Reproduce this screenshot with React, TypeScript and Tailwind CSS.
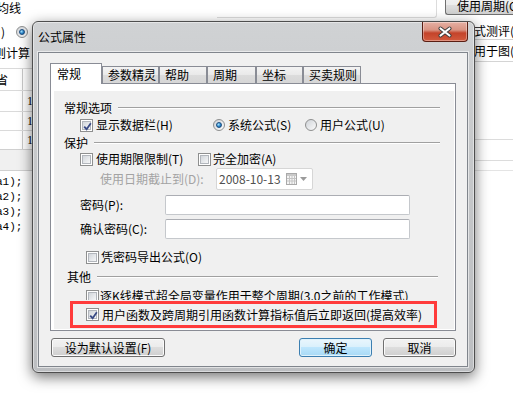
import type { ReactNode } from "react";

function CheckBox({ checked = false }: { checked?: boolean }) {
  return (
    <span className="relative flex h-[13px] w-[13px] shrink-0 items-center justify-center border border-[#8e8f8f] bg-white">
      <span className="h-[9px] w-[9px] border border-[#b2b6bc] bg-[linear-gradient(135deg,#d2d6db,#f6f7f8)]" />
      {checked && (
        <svg className="absolute left-[1px] top-[1px]" width="11" height="11" viewBox="0 0 11 11">
          <path d="M2.2 5.6 L4.6 8.2 L8.8 2.2" fill="none" stroke="#3a4b85" strokeWidth="1.8" />
        </svg>
      )}
    </span>
  );
}

function Radio({ checked = false }: { checked?: boolean }) {
  return (
    <span className="flex h-[12px] w-[12px] shrink-0 items-center justify-center rounded-full border border-[#8e8f8f] bg-[linear-gradient(135deg,#cfd3d8,#fbfbfb)]">
      {checked && (
        <span className="h-[6px] w-[6px] rounded-full border border-[#1b4c7e] bg-[radial-gradient(circle_at_35%_35%,#a8e4ff,#2b8ad0_55%,#164d84)]" />
      )}
    </span>
  );
}

function Section({ label, pad, lineRight }: { label: string; pad: string; lineRight: string }) {
  return (
    <div className={`flex h-[14px] items-center ${pad}`}>
      <span className="whitespace-nowrap">{label}</span>
      <span className={`ml-[6px] h-[2px] flex-1 border-t border-b border-t-[#a0a0a0] border-b-white ${lineRight}`} />
    </div>
  );
}

function WinButton({ children, width, primary = false }: { children: ReactNode; width: string; primary?: boolean }) {
  return (
    <div
      className={`flex h-[19px] ${width} items-center justify-center rounded-[3px] border ${
        primary
          ? "border-[#3c7fb1] bg-[linear-gradient(to_bottom,#eaf6fd_0%,#d9f0fc_50%,#bee6fd_50%,#a7d9f5_100%)] shadow-[inset_0_0_0_1px_#dff2fc]"
          : "border-[#707070] bg-[linear-gradient(to_bottom,#f2f2f2_0%,#ebebeb_50%,#dddddd_50%,#cfcfcf_100%)] shadow-[inset_0_0_0_1px_#fbfbfb]"
      }`}
    >
      {children}
    </div>
  );
}

const tabs = [
  { label: "参数精灵", w: "w-[57px]" },
  { label: "帮助", w: "w-[48px]" },
  { label: "周期", w: "w-[49px]" },
  { label: "坐标", w: "w-[47px]" },
  { label: "买卖规则", w: "w-[58px]" },
];

function BackgroundApp() {
  return (
    <div className="flex h-full flex-col">
      {/* top strip of the main window */}
      <div className="flex h-[21px] items-start">
        <span className="-ml-[3px] mt-[1px] whitespace-nowrap">均线</span>
        <div className="ml-auto mr-[8px] h-[18px] w-[220px] rounded-br-[3px] border-r border-b border-[#dcdcdc]" />
        <div className="-mt-[4px] flex h-[19px] w-[68px] shrink-0 items-center overflow-hidden rounded-l-[3px] border border-r-0 border-[#707070] bg-[linear-gradient(to_bottom,#f2f2f2_0%,#ebebeb_50%,#dddddd_50%,#cfcfcf_100%)] pl-[11px]">
          <span className="whitespace-nowrap">使用周期(O)</span>
        </div>
      </div>

      <div className="flex flex-1">
        {/* left edge of main window */}
        <div className="flex w-[32px] shrink-0 flex-col overflow-hidden">
          <div className="flex h-[21px] items-center">
            <span className="w-[16px] shrink-0 pl-[1px]">)</span>
            <Radio checked />
          </div>
          <div className="flex h-[22px] items-center">
            <span className="-ml-[6px] whitespace-nowrap">则计算</span>
          </div>
          <div className="mt-[4px] flex flex-col border-t border-[#dadada]">
            <div className="flex h-[21px]">
              <div className="flex w-[23px] shrink-0 items-center border-r border-[#c8c8c8]">
                <span className="-ml-[4px]">省</span>
              </div>
            </div>
            {["h-[21px]", "h-[19px]", "h-[19px]"].map((h, i) => (
              <div key={i} className={`flex ${h} border-t border-[#dadada]`}>
                <div className="w-[23px] shrink-0 border-r border-[#c8c8c8]" />
                <span className="flex items-center pl-[4px] font-['Liberation_Serif',serif]">1</span>
              </div>
            ))}
          </div>
          <div className="h-[22px] border-t border-b border-[#d0d0d0] bg-[#f0f0f0]" />
          <div className="flex flex-col pt-[4px] font-['Liberation_Mono',monospace] text-[11px] leading-[15px]">
            {["a1);", "a2);", "a3);", "a4);"].map((t) => (
              <span key={t} className="-ml-[4px] whitespace-nowrap">
                {t}
              </span>
            ))}
          </div>
        </div>

        <div className="flex-1" />

        {/* right edge of main window */}
        <div className="flex w-[38px] shrink-0 flex-col overflow-hidden">
          <div className="flex h-[19px] items-center border-b border-[#d4d4d4] pt-[2px]">
            <span className="-ml-[1px] whitespace-nowrap">式测评(O)</span>
          </div>
          <div className="flex h-[22px] items-center border-b border-[#d4d4d4]">
            <span className="-ml-[1px] whitespace-nowrap">用于图(O)</span>
          </div>
          <div className="mt-[77px] h-[22px] border-t border-b border-[#dcdcdc]" />
          <div className="h-[10px] border-b border-[#e4e4e4]" />
        </div>
      </div>
    </div>
  );
}

function Dialog() {
  return (
    <div className="absolute left-[32px] top-[21px] flex h-[352px] w-[443px] flex-col rounded-[6px] border border-[#4e4e4e] bg-[linear-gradient(to_bottom,#d0d2d4,#c6c8ca_40%,#bcbec1)] shadow-[0_4px_14px_rgba(0,0,0,0.55),inset_0_0_0_1px_rgba(255,255,255,0.45)]">
      {/* title bar */}
      <div className="flex h-[30px] items-start">
        <span className="ml-[5px] self-center">公式属性</span>
        <div className="ml-auto mr-[6px] flex h-[20px] w-[46px] items-center justify-center rounded-b-[4px] border border-t-0 border-[#5a1e13] bg-[linear-gradient(to_bottom,#e6b0a3_0%,#d99382_42%,#c4432a_58%,#d25a3e_100%)] shadow-[inset_0_0_0_1px_rgba(255,255,255,0.35)]">
          <svg width="16" height="12" viewBox="0 0 16 12">
            <path d="M3.5 2.5 L12.5 9.5 M12.5 2.5 L3.5 9.5" stroke="#3b3b3b" strokeWidth="4" strokeLinecap="round" />
            <path d="M3.5 2.5 L12.5 9.5 M12.5 2.5 L3.5 9.5" stroke="#ffffff" strokeWidth="2.2" strokeLinecap="round" />
          </svg>
        </div>
      </div>

      {/* client area */}
      <div className="mb-[5px] ml-[5px] mr-[6px] flex flex-1 flex-col border border-[#80858c] bg-[#f0f0f0] px-[11px] pt-[10px] shadow-[0_0_0_1px_rgba(255,255,255,0.55)]">
        {/* tabs */}
        <div className="relative z-10 flex h-[21px] items-start">
          <div className="h-[21px] w-[52px] shrink-0 border-t border-r border-l border-[#898c95] bg-white pl-[6px] pt-[3px]">
            常规
          </div>
          {tabs.map((t) => (
            <div
              key={t.label}
              className={`mt-[3px] h-[17px] ${t.w} shrink-0 border-t border-r border-l border-[#898c95] bg-[linear-gradient(to_bottom,#f3f3f3,#e9e9e9_50%,#dcdcdc_50%,#d6d6d6)] pl-[5px] pt-[1px] whitespace-nowrap`}
            >
              {t.label}
            </div>
          ))}
        </div>

        {/* tab page */}
        <div className="-mt-[1px] flex h-[248px] flex-col border border-[#898c95] bg-white pt-[7px] pr-[1px] pb-[1px] pl-[3px]">
          <div className="flex flex-1 flex-col bg-[#f0f0f0]">
            <div className="mt-[10px]">
              <Section label="常规选项" pad="pl-[10px]" lineRight="mr-[14px]" />
            </div>
            <div className="mt-[3px] flex h-[14px] items-center pl-[26px]">
              <div className="flex w-[133px] shrink-0 items-center">
                <CheckBox checked />
                <span className="ml-[3px] whitespace-nowrap">显示数据栏(H)</span>
              </div>
              <div className="flex w-[92px] shrink-0 items-center">
                <Radio checked />
                <span className="ml-[3px] whitespace-nowrap">系统公式(S)</span>
              </div>
              <div className="flex items-center">
                <Radio />
                <span className="ml-[3px] whitespace-nowrap">用户公式(U)</span>
              </div>
            </div>

            <div className="mt-[4px]">
              <Section label="保护" pad="pl-[10px]" lineRight="mr-[14px]" />
            </div>
            <div className="mt-[2px] flex h-[14px] items-center pl-[26px]">
              <div className="flex w-[118px] shrink-0 items-center">
                <CheckBox />
                <span className="ml-[3px] whitespace-nowrap">使用期限限制(T)</span>
              </div>
              <div className="flex items-center">
                <CheckBox />
                <span className="ml-[2px] whitespace-nowrap">完全加密(A)</span>
              </div>
            </div>
            <div className="mt-[2px] flex h-[22px] items-center pl-[46px]">
              <span className="w-[116px] shrink-0 whitespace-nowrap text-[#a3a3a3]">使用日期截止到(D):</span>
              <div className="flex h-[22px] w-[97px] items-center rounded-[2px] border border-[#d6d6d6] bg-white pl-[2px] pr-[5px]">
                <span className="text-[#505050]">2008-10-13</span>
                <svg className="ml-auto" width="11" height="12" viewBox="0 0 11 12">
                  <rect x="0.5" y="0.5" width="10" height="11" fill="#f4f4f4" stroke="#a9a9a9" />
                  <rect x="1" y="1" width="9" height="2" fill="#c9c9c9" />
                  <path d="M1 5.5 H10 M1 8 H10 M3.5 3 V11 M6 3 V11 M8.5 3 V11" stroke="#c4c4c4" strokeWidth="1" />
                </svg>
                <svg className="ml-[3px]" width="7" height="4" viewBox="0 0 7 4">
                  <path d="M0 0 H7 L3.5 4 Z" fill="#9b9b9b" />
                </svg>
              </div>
            </div>

            <div className="mt-[5px] flex h-[20px] items-center pl-[26px]">
              <span className="w-[85px] shrink-0 whitespace-nowrap">密码(P):</span>
              <div className="h-[20px] w-[245px] rounded-[2px] border border-[#c5c8cc] border-t-[#abadb3] bg-white" />
            </div>
            <div className="mt-[4px] flex h-[20px] items-center pl-[26px]">
              <span className="w-[85px] shrink-0 whitespace-nowrap">确认密码(C):</span>
              <div className="h-[20px] w-[245px] rounded-[2px] border border-[#c5c8cc] border-t-[#abadb3] bg-white" />
            </div>

            <div className="mt-[11px] flex h-[14px] items-center pl-[32px]">
              <CheckBox />
              <span className="ml-[2px] whitespace-nowrap">凭密码导出公式(O)</span>
            </div>

            <div className="mt-[6px]">
              <Section label="其他" pad="pl-[13px]" lineRight="mr-[16px]" />
            </div>
            <div className="mt-[5px] h-[11px] overflow-hidden pl-[32px]">
              <div className="flex h-[14px] items-center">
                <CheckBox />
                <span className="ml-[1px] whitespace-nowrap">逐K线模式超全局变量作用于整个周期(3.0之前的工作模式)</span>
              </div>
            </div>
            <div className="ml-[16px] mt-[1px] flex h-[27px] w-[367px] items-center border-[3px] border-[#ff3b3b] pl-[13px]">
              <CheckBox checked />
              <span className="ml-[3px] whitespace-nowrap">用户函数及跨周期引用函数计算指标值后立即返回(提高效率)</span>
            </div>
          </div>
        </div>

        {/* buttons */}
        <div className="mt-[7px] flex items-center">
          <div className="ml-[1px]">
            <WinButton width="w-[114px]">设为默认设置(F)</WinButton>
          </div>
          <div className="ml-auto">
            <WinButton width="w-[73px]" primary>
              确定
            </WinButton>
          </div>
          <div className="ml-[11px]">
            <WinButton width="w-[73px]">取消</WinButton>
          </div>
        </div>
      </div>
    </div>
  );
}

export default function App() {
  return (
    <div className="relative h-[415px] w-[513px] overflow-hidden bg-white font-['Noto_Sans_CJK_SC',sans-serif] text-[12px] leading-[14px] text-black">
      <BackgroundApp />
      <Dialog />
    </div>
  );
}
